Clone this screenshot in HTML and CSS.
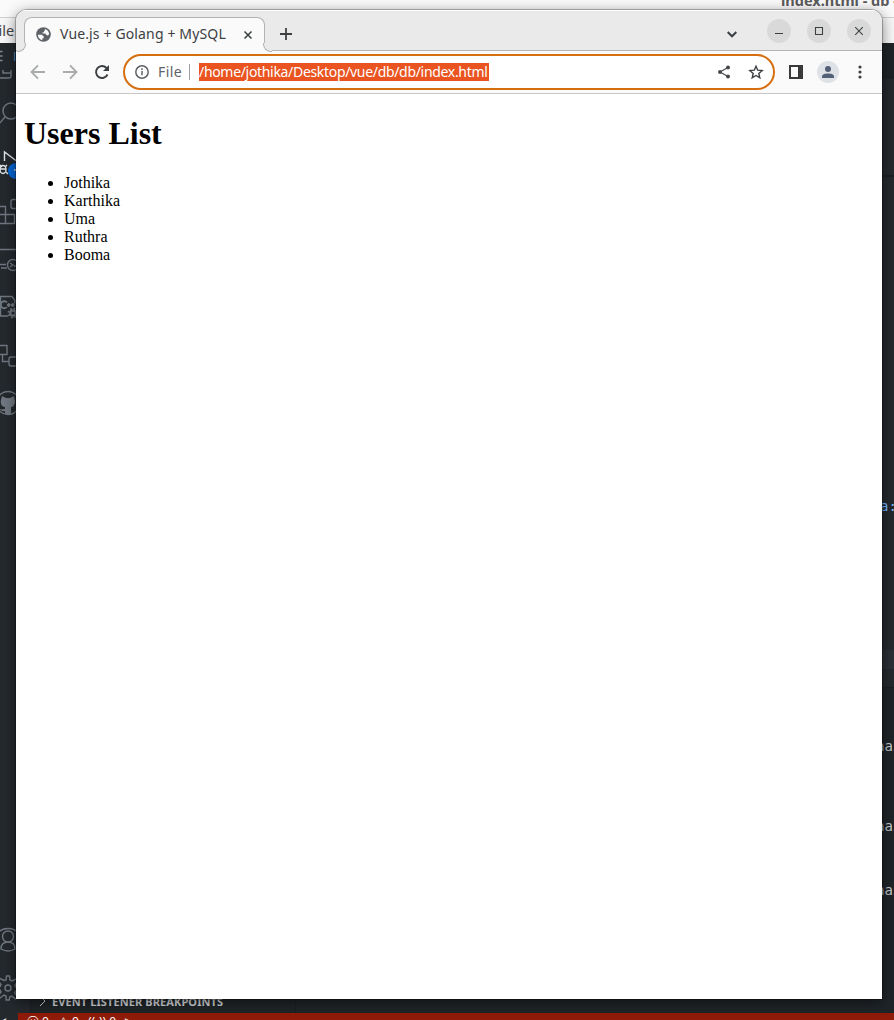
FILE: index.html
```html
<!DOCTYPE html>
<html lang="en">
<head>
<meta charset="utf-8">
<title>Vue.js + Golang + MySQL</title>
<link rel="stylesheet" href="styles.css">
</head>
<body>
<div class="editor">
  <div class="editor-title">index.html - db - Visual Studio Code</div>
  <div class="editor-menu">File</div>
  <div class="editor-body">
    <div class="activity">
      <svg viewBox="0 0 32 48"><path d="M3 27v3h8M0 35h9q2 0 2-2v-6" /><path d="M0 8.500h2.500M0 13h2.500M0 17.500h2.500" stroke="#858b91"/><path d="M14.500 9v9" stroke="#3b78b0"/></svg>
      <svg viewBox="0 0 32 48"><circle cx="11" cy="20" r="8"/><path d="M5 26l-7 8"/></svg>
      <svg class="active" viewBox="0 0 32 48"><path d="M4.500 22V13l12 9"/><ellipse cx="3" cy="30.500" rx="3" ry="4"/><path d="M0 26l2 2M7 26l-2 2M6 33l2 2M0 30h6"/><circle cx="16" cy="32" r="8" fill="#0366d6" stroke="none"/><path d="M14 31h4"/></svg>
      <svg viewBox="0 0 32 48"><path d="M0 19.500h5.500v17M0 27.500h14.500v9H0M20 12.500h-7q-2 0-2 2v5q0 2 2 2h7"/></svg>
      <svg viewBox="0 0 32 48"><path d="M0 14.500h17M0 29.500h6M1 33h6"/><circle cx="13" cy="30" r="5.500"/><path d="M10 28l3 2-3 2M14 31h4"/></svg>
      <svg viewBox="0 0 32 48"><path d="M0 13.500h12l3 4v3M.5 13v20H8"/><path stroke-width="1.800" d="M7 19.500a3.500 3.500 0 1 0 0 4.500M7 22h3.500M11 22h3.500M8.700 20v4M12.700 20v4"/><circle cx="13" cy="30" r="2.700" stroke-width="2.200"/><circle cx="13" cy="30" r="4.500" stroke-width="2" stroke-dasharray="1.770 1.770"/></svg>
      <svg viewBox="0 0 32 48"><path d="M0 14.500h7v9H0M2.500 24v6.500h6M19 26h-8q-2 0-2 2v5q0 2 2 2h8"/></svg>
      <svg viewBox="0 0 32 48"><circle cx="8" cy="24" r="11.500"/><path fill="#6f7780" stroke="none" d="M2 17l4 2h4l4-2 1 5c0 4-2 6-4 6v7H5v-3c-3 1-4-1-5-2 2 0 2 1 5 0v-2c-3 0-5-3-4-7z"/></svg>
      <span class="spacer"></span>
      <svg viewBox="0 0 32 48"><circle cx="8" cy="20.500" r="5.500"/><path d="M1 33c0-5 3-7 7-7s7 2 7 7q-7 4-14 0zM-2 17C2 11 14 11 18 17"/></svg>
      <svg viewBox="0 0 32 48"><circle cx="8" cy="24" r="3"/><path d="M6 16l.5-4h3l.5 4 2 1 4-2 2 2-3 4 .7 2 4 .5v3l-4 .5-1 2 3 4-2 2-4-3-2 1-.5 3h-3L6 32l-2-1-4 3-2-2 3-4-1-2-4 0v-3l4-.5 1-2-3-4 2-2 4 2z"/></svg>
      <span class="activity-end"></span>
    </div>
    <div class="sidebar"><div class="section"><svg viewBox="0 0 8 10"><path d="M2 0l5 5-5 5"/></svg>EVENT LISTENER BREAKPOINTS</div></div>
    <div class="main">
      <div class="tabs"></div><div class="code"></div><div class="code second"><span>a:</span></div><div class="line"></div><div class="code rest"></div>
      <div class="terminal"><span>nai</span><span>nai</span><span>nai</span></div>
    </div>
  </div>
  <div class="status"><span class="remote">&lt;</span><div class="items"><span>ⓧ 0</span><span>⚠ 0</span><span>((ꞏ)) 0</span><span>▷</span></div></div>
</div>

<div class="window">
  <div class="tabstrip">
    <div class="tab">
      <svg class="globe" viewBox="0 0 16 16"><circle cx="8" cy="8" r="7.800" fill="#5f6368"/><path fill="#fafafa" d="M2 8.200h4.200l2 1.800v2H6.800v2C4 13.500 2 11 2 8.200zM9.500 2c2.700.8 4.500 3 4.500 5.700L12.600 9 10.800 8.300 10 7H7V5.500h1.500V4h1z"/></svg>
      <span class="tab-name">Vue.js + Golang + MySQL</span>
      <svg class="tab-close" viewBox="0 0 10 10"><path d="M1.500 1.500l7 7M8.500 1.500l-7 7"/></svg>
    </div>
    <svg class="plus" viewBox="0 0 12 12"><path d="M6 0v12M0 6h12"/></svg>
    <svg class="chevron" viewBox="0 0 10 8"><path d="M.7 2l4.300 4.300L9.300 2"/></svg>
    <div class="controls">
      <span><svg viewBox="0 0 10 10"><path d="M1 7.500h8"/></svg></span>
      <span><svg viewBox="0 0 10 10"><path d="M1.500 1.500h7v7h-7z"/></svg></span>
      <span><svg viewBox="0 0 10 10"><path d="M1.200 1.200l7.600 7.600M8.800 1.200L1.200 8.800"/></svg></span>
    </div>
  </div>
  <div class="toolbar">
    <svg class="nav off" viewBox="0 0 16 16"><path d="M15 8H2M8 1.300L1.500 8 8 14.700"/></svg>
    <svg class="nav off" viewBox="0 0 16 16"><path d="M1 8h13M8 1.300L14.500 8 8 14.700"/></svg>
    <svg class="nav" viewBox="0 0 16 16"><path d="M13.500 10.500A6 6 0 1 1 12.500 4l1.500 2"/><path d="M15 1v6H9z" fill="#3c4043" stroke="none"/></svg>
    <div class="address">
      <svg class="info" viewBox="0 0 16 16"><circle cx="8" cy="8" r="6.200"/><path d="M8 7v4.300M8 4.200v1.700"/></svg>
      <span class="scheme">File</span>
      <span class="url">/home/jothika/Desktop/vue/db/db/index.html</span>
      <svg class="share" viewBox="0 0 14 14"><path d="M11 2.500L3 7l8 4.500"/><g fill="#474a4d" stroke="none"><circle cx="11" cy="2.500" r="2"/><circle cx="3" cy="7" r="2"/><circle cx="11" cy="11.500" r="2"/></g></svg>
      <svg class="star" viewBox="0 0 16 16"><path d="M8 2.200l1.700 4 4.500.4-3.400 2.900 1 4.300L8 11.500l-3.800 2.300 1-4.300-3.400-2.900 4.500-.4z"/></svg>
    </div>
    <svg class="panel" viewBox="0 0 14 14"><path fill="#37393b" fill-rule="evenodd" d="M0 0h14v14H0zM2 2v10h7V2z"/></svg>
    <div class="avatar"><svg viewBox="0 0 12 12"><circle cx="6" cy="3" r="3"/><path d="M0 12v-1.500C0 8.300 3 7.500 6 7.500s6 .8 6 3V12z"/></svg></div>
    <svg class="more" viewBox="0 0 4 14"><circle cx="2" cy="2" r="1.600"/><circle cx="2" cy="7" r="1.600"/><circle cx="2" cy="12" r="1.600"/></svg>
  </div>
  <div class="page">
    <h1>Users List</h1>
    <ul><li>Jothika</li><li>Karthika</li><li>Uma</li><li>Ruthra</li><li>Booma</li></ul>
  </div>
</div>
</body>
</html>
```
FILE: styles.css
```css
* { box-sizing: border-box; }
body { margin: 0; width: 894px; height: 1020px; overflow: hidden; position: relative; font-family: "Noto Sans", "Open Sans", sans-serif; }
svg { display: block; flex: none; fill: none; stroke: #3c4043; stroke-width: 1.5; }

.editor { height: 1020px; display: flex; flex-direction: column; background: #24292e; }
.editor-title { height: 18px; background: #fafafa; border-bottom: 1px solid #d0d0d0; padding-left: 781px; font: bold 14.500px/1px "Noto Sans", sans-serif; color: #5b5b5b; white-space: nowrap; overflow: hidden; }
.editor-menu { height: 25px; background: #f7f7f7; margin-left: -9px; font-size: 14.500px; line-height: 25px; color: #444; }
.editor-body { height: 970px; display: flex; }
.activity { width: 31px; flex: none; display: flex; flex-direction: column; overflow: hidden; background: #24292e; border-right: 1px solid #1b1f23; }
.activity svg { width: 32px; height: 48px; stroke: #6f7780; stroke-width: 1.4; }
.activity .active { stroke: #e1e4e8; }
.spacer { flex: 1; }
.activity-end { height: 1px; }
.sidebar { width: 265px; flex: none; background: #1f2428; border-right: 1px solid #1b1f23; display: flex; align-items: flex-end; }
.section { display: flex; align-items: center; height: 24px; padding: 0 0 0 7px; gap: 6px; font-size: 11px; letter-spacing: .1px; font-weight: bold; color: #cfd3d7; white-space: nowrap; }
.section svg { width: 8px; height: 10px; stroke: #cfd3d7; stroke-width: 1; }
.main { flex: 1; min-width: 0; overflow: hidden; display: flex; flex-direction: column; background: #24292e; color: #c5cbd1; font: 14px/18px "DejaVu Sans Mono", monospace; }
.tabs { height: 35px; background: #1f2428; border-bottom: 1px solid #1b1f23; }
.code { height: 99px; border-bottom: 2px solid #1b1f23; }
.second { height: 473px; border: 0; padding: 320px 0 0 584px; color: #79b8ff; }
.line { height: 19px; background: #2b3036; }
.rest { height: 19px; border-bottom: 1px solid #1b1f23; }
.terminal { flex: 1; background: #1f2428; padding: 49px 0 0 580px; display: flex; flex-direction: column; overflow: hidden; }
.terminal span { height: 80px; flex: none; }
.terminal span:nth-child(2) { height: 64px; }
.status { height: 7px; display: flex; overflow: hidden; background: #8f1b08; color: #fff; font-size: 12px; line-height: 18px; }
.remote { width: 18px; background: #24292e; }
.items { display: flex; gap: 9px; padding-left: 9px; white-space: nowrap; }

.window { position: absolute; left: 16px; top: 10px; width: 866px; height: 989px; border-radius: 11px 11px 0 0; background: #fff; box-shadow: 0 0 0 1px rgba(0,0,0,.25), 0 3px 14px rgba(0,0,0,.5); overflow: hidden; }
.tabstrip { height: 41px; display: flex; background: #eaeaea; border-top: 1px solid #fff; border-bottom: 1px solid #b3b3b3; }
.tab { position: relative; display: flex; align-items: center; width: 241px; height: 34px; margin: 6px 0 0 8px; padding-left: 11px; background: #fafafa; border: 1px solid #b3b3b3; border-bottom: 0; border-radius: 8px 8px 0 0; }
.tab::before, .tab::after { content: ""; position: absolute; bottom: -1px; width: 8px; height: 8px; border: solid #b3b3b3; background: #eaeaea; }
.tab::before { left: -8px; border-width: 0 1px 1px 0; border-radius: 0 0 8px 0; box-shadow: 3px 3px 0 #fafafa; clip-path: inset(0 -1px -1px 0); }
.tab::after { right: -8px; border-width: 0 0 1px 1px; border-radius: 0 0 0 8px; box-shadow: -3px 3px 0 #fafafa; clip-path: inset(0 0 -1px -1px); }
.globe { width: 15px; height: 15px; stroke: none; }
.tab-name { position: relative; top: -1px; width: 168px; margin-left: 9px; color: #3c4043; font-size: 14px; letter-spacing: .14px; white-space: nowrap; }
.tab-close { width: 10px; height: 10px; margin-left: 15px; }
.plus { width: 12px; height: 12px; margin: 17px 0 0 15px; stroke-width: 1.8; }
.chevron { width: 10px; height: 8px; margin: 19px 0 0 435px; stroke-width: 2; }
.controls { display: flex; gap: 16px; margin: 8px 0 0 30px; }
.controls span { width: 24px; height: 24px; border-radius: 50%; background: #d9d9d9; display: flex; align-items: center; justify-content: center; }
.controls svg { width: 10px; height: 10px; stroke-width: 1.1; }
.toolbar { height: 43px; display: flex; align-items: center; padding-left: 14px; background: #fafafa; border-bottom: 1px solid #c7c7c7; }
.nav { width: 16px; height: 16px; margin-right: 16px; stroke-width: 1.9; }
.off { stroke: #a9abad; stroke-width: 1.9; }
.address { width: 652px; height: 36px; margin-left: -3px; border: 2px solid #d66e10; border-radius: 18px; background: #fff; display: flex; align-items: center; padding-left: 9px; }
.info { width: 16px; height: 16px; stroke: #5f6368; }
.scheme { width: 32px; margin-left: 8px; font-size: 14px; letter-spacing: .4px; line-height: 16px; color: #5f6368; border-right: 1px solid #9aa0a6; white-space: nowrap; }
.url { margin-left: 9px; background: #e95420; color: #fff; font-size: 14px; letter-spacing: -.32px; line-height: 17px; padding-bottom: 1px; white-space: nowrap; width: 290px; }
.share { width: 14px; height: 14px; margin-left: 228px; stroke: #474a4d; stroke-width: 1.2; }
.star { width: 16px; height: 16px; margin-left: 17px; stroke-width: 1.4; }
.panel { width: 14px; height: 14px; margin-left: 14px; stroke: none; }
.avatar { width: 22px; height: 22px; margin-left: 14px; border-radius: 50%; background: #dee1e6; display: flex; align-items: center; justify-content: center; }
.avatar svg { width: 12px; height: 12px; fill: #535f75; stroke: none; }
.more { width: 4px; height: 14px; margin-left: 19px; fill: #3c4043; stroke: none; }
.page { padding: 1px 8px; font-family: "Liberation Serif", "Times New Roman", serif; font-size: 16px; color: #000; }
h1 { margin: 20.400px 0 21.400px; font-size: 32px; line-height: 37px; }
ul { margin: 0; padding-left: 40px; }
li { line-height: 18px; }
```
